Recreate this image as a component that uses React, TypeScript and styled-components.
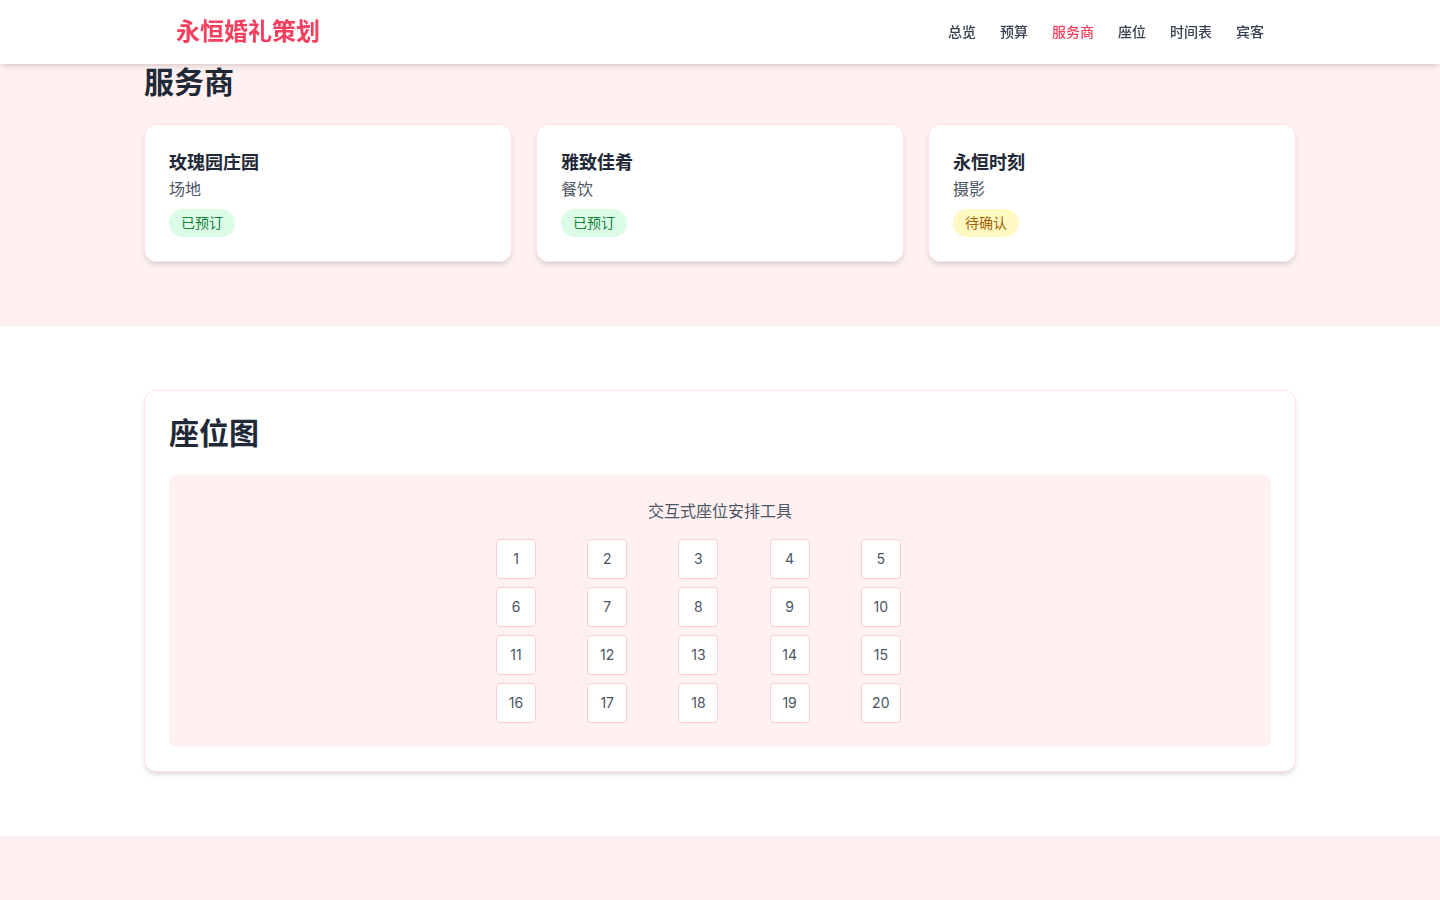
import React from "react";
import styled, { createGlobalStyle } from "styled-components";

const GlobalStyle = createGlobalStyle`
  body {
    margin: 0;
    font-family: Inter, "Noto Sans CJK SC", "Noto Sans", sans-serif;
    color: #1f2937;
    background: #ffffff;
  }
  * { box-sizing: border-box; }
`;

const Header = styled.header`
  position: fixed;
  top: 0;
  left: 0;
  right: 0;
  height: 64px;
  background: #ffffff;
  box-shadow: 0 4px 6px -1px rgba(0, 0, 0, 0.1), 0 2px 4px -2px rgba(0, 0, 0, 0.1);
  z-index: 10;
`;

const HeaderInner = styled.div`
  max-width: 1152px;
  height: 100%;
  margin: 0 auto;
  padding: 0 32px;
  display: flex;
  align-items: center;
  justify-content: space-between;
`;

const Logo = styled.div`
  font-size: 24px;
  line-height: 32px;
  font-weight: 600;
  color: #f43f5e;
  margin-top: -1px;
`;

const Nav = styled.nav`
  display: flex;
  gap: 24px;
  margin-top: -1px;
`;

const NavLink = styled.a<{ $active?: boolean }>`
  font-size: 14px;
  line-height: 20px;
  font-weight: 500;
  color: ${(p) => (p.$active ? "#f43f5e" : "#374151")};
  text-decoration: none;
  cursor: pointer;
`;

const Section = styled.section<{ $tint?: boolean }>`
  background: ${(p) => (p.$tint ? "#fff1f2" : "#ffffff")};
  padding: 64px 0;
`;

const Container = styled.div`
  max-width: 1152px;
  margin: 0 auto;
`;

const SectionTitle = styled.h2`
  margin: 0 0 24px;
  font-size: 30px;
  line-height: 36px;
  font-weight: 700;
  color: #1f2937;
`;

const VendorGrid = styled.div`
  display: grid;
  grid-template-columns: repeat(3, 1fr);
  gap: 24px;
`;

const Card = styled.div`
  background: #ffffff;
  border: 1px solid #ffe4e6;
  border-radius: 12px;
  padding: 24px;
  box-shadow: 0 4px 6px -1px rgba(0, 0, 0, 0.1), 0 2px 4px -2px rgba(0, 0, 0, 0.1);
`;

const VendorName = styled.h3`
  margin: 0;
  font-size: 18px;
  line-height: 28px;
  font-weight: 600;
  color: #1f2937;
`;

const VendorType = styled.p`
  margin: 0;
  font-size: 16px;
  line-height: 24px;
  color: #4b5563;
`;

const Badge = styled.span<{ $status: "booked" | "pending" }>`
  display: inline-block;
  margin-top: 8px;
  padding: 4px 12px;
  border-radius: 9999px;
  font-size: 14px;
  line-height: 20px;
  background: ${(p) => (p.$status === "booked" ? "#dcfce7" : "#fef9c3")};
  color: ${(p) => (p.$status === "booked" ? "#15803d" : "#a16207")};
`;

const SeatCard = styled(Card)``;

const SeatArea = styled.div`
  background: #fff1f2;
  border-radius: 8px;
  padding: 24px;
`;

const SeatCaption = styled.p`
  margin: 0 0 16px;
  text-align: center;
  font-size: 16px;
  line-height: 24px;
  color: #4b5563;
`;

const SeatGrid = styled.div`
  max-width: 448px;
  margin: 0 auto;
  display: grid;
  grid-template-columns: repeat(5, 1fr);
  gap: 8px;
`;

const Seat = styled.div`
  width: 40px;
  height: 40px;
  background: #ffffff;
  border: 1px solid #fecdd3;
  border-radius: 4px;
  display: flex;
  align-items: center;
  justify-content: center;
  font-size: 14px;
  line-height: 20px;
  color: #4b5563;
  padding-bottom: 1px;
`;

const Footer = styled.section`
  background: #fff1f2;
  height: 120px;
`;

const vendors: { name: string; type: string; status: "booked" | "pending"; label: string }[] = [
  { name: "玫瑰园庄园", type: "场地", status: "booked", label: "已预订" },
  { name: "雅致佳肴", type: "餐饮", status: "booked", label: "已预订" },
  { name: "永恒时刻", type: "摄影", status: "pending", label: "待确认" },
];

const navItems = ["总览", "预算", "服务商", "座位", "时间表", "宾客"];

const App: React.FC = () => {
  return (
    <>
      <GlobalStyle />
      <Header>
        <HeaderInner>
          <Logo>永恒婚礼策划</Logo>
          <Nav>
            {navItems.map((item) => (
              <NavLink key={item} $active={item === "服务商"}>
                {item}
              </NavLink>
            ))}
          </Nav>
        </HeaderInner>
      </Header>

      <Section $tint>
        <Container>
          <SectionTitle>服务商</SectionTitle>
          <VendorGrid>
            {vendors.map((v) => (
              <Card key={v.name}>
                <VendorName>{v.name}</VendorName>
                <VendorType>{v.type}</VendorType>
                <Badge $status={v.status}>{v.label}</Badge>
              </Card>
            ))}
          </VendorGrid>
        </Container>
      </Section>

      <Section>
        <Container>
          <SeatCard>
            <SectionTitle>座位图</SectionTitle>
            <SeatArea>
              <SeatCaption>交互式座位安排工具</SeatCaption>
              <SeatGrid>
                {Array.from({ length: 20 }, (_, i) => (
                  <Seat key={i}>{i + 1}</Seat>
                ))}
              </SeatGrid>
            </SeatArea>
          </SeatCard>
        </Container>
      </Section>

      <Footer />
    </>
  );
};

export default App;
